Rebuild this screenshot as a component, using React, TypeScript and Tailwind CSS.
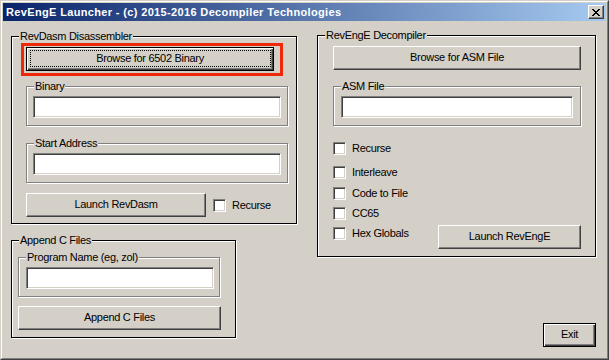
import React from "react";

const FONT = "font-['Liberation_Sans',Arial,sans-serif]";
const raised =
  "bg-[#d4d0c8] border border-t-white border-l-white border-r-[#404040] border-b-[#404040] shadow-[inset_-1px_-1px_0_#808080]";
const defBtn =
  "bg-[#d4d0c8] border border-black shadow-[inset_1px_1px_0_#ffffff,inset_-1px_-1px_0_#404040,inset_-2px_-2px_0_#808080]";
const sunken =
  "bg-white border border-t-[#808080] border-l-[#808080] border-r-white border-b-white shadow-[inset_1px_1px_0_#404040,inset_-1px_-1px_0_#d4d0c8]";
const etched = "border border-[#808080] shadow-[inset_1px_1px_0_#ffffff,1px_1px_0_#ffffff]";
const blackGroup = "border border-black shadow-[inset_1px_1px_0_#ffffff,1px_1px_0_#ffffff]";

function Legend({ children }: { children: React.ReactNode }) {
  return (
    <span className="relative block w-fit -mt-[7px] ml-[7px] px-[1px] bg-[#d4d0c8] leading-[13px] text-black">
      {children}
    </span>
  );
}

function Button({
  className,
  children,
  isDefault,
  focus,
}: {
  className: string;
  children: React.ReactNode;
  isDefault?: boolean;
  focus?: boolean;
}) {
  return (
    <div
      className={`relative flex items-center justify-center h-[24px] pb-[2px] leading-[12px] text-black ${
        isDefault ? defBtn : raised
      } ${className}`}
    >
      {focus && (
        <div className="absolute left-[3px] top-[2px] right-[2px] bottom-[3px] border border-dotted border-black" />
      )}
      <span>{children}</span>
    </div>
  );
}

function TextBox({ className }: { className: string }) {
  return <div className={`h-[22px] ${sunken} ${className}`} />;
}

function Check({ label, className }: { label: string; className?: string }) {
  return (
    <div className={`flex items-start ${className ?? ""}`}>
      <div className={`w-[13px] h-[13px] ${sunken}`} />
      <span className="ml-[6px] leading-[12px] text-black">{label}</span>
    </div>
  );
}

function Etched({
  label,
  className,
  padClass,
}: {
  label: string;
  className: string;
  padClass: string;
}) {
  return (
    <div className={`relative ${etched} ${className}`}>
      <Legend>{label}</Legend>
      <div className={`pt-[3px] pb-[7px] ${padClass}`}>
        <TextBox className="w-full" />
      </div>
    </div>
  );
}

function CloseGlyph() {
  const px: [number, number][] = [];
  const rows = ["XX....XX", ".XX..XX.", "..XXXX..", "...XX...", "..XXXX..", ".XX..XX.", "XX....XX"];
  rows.forEach((r, y) =>
    r.split("").forEach((c, x) => {
      if (c === "X") px.push([x, y]);
    })
  );
  return (
    <svg width="8" height="7" viewBox="0 0 8 7" shapeRendering="crispEdges">
      {px.map(([x, y]) => (
        <rect key={`${x}-${y}`} x={x} y={y} width="1" height="1" fill="#000" />
      ))}
    </svg>
  );
}

export default function App() {
  return (
    <div className={`w-[609px] h-[360px] ${FONT} text-[11px] tracking-[-0.3px] bg-[#d4d0c8]`}>
      <div className="w-full h-full border border-t-[#d4d0c8] border-l-[#d4d0c8] border-r-[#404040] border-b-[#404040]">
        <div className="w-full h-full border border-t-white border-l-white border-r-[#808080] border-b-[#808080] p-[1px] flex flex-col">
          {/* Title bar */}
          <div className="h-[18px] flex items-center justify-between pl-[3px] pr-[2px] bg-[linear-gradient(to_right,#0a246a,#a6caf0)]">
            <span className="text-white font-bold text-[11px] tracking-[0.35px] leading-[18px] whitespace-nowrap">
              RevEngE Launcher - (c) 2015-2016 Decompiler Technologies
            </span>
            <div className={`w-[16px] h-[14px] flex items-center justify-center ${raised}`}>
              <CloseGlyph />
            </div>
          </div>

          {/* Body */}
          <div className="flex-1 flex pl-[8px] gap-[20px]">
            {/* Left column */}
            <div className="w-[286px] pt-[15px] flex flex-col">
              <div className={`relative w-full ${blackGroup}`}>
                <Legend>RevDasm Disassembler</Legend>
                <div className="pl-[14px] pt-[4px] pb-[6px] flex flex-col">
                  <div className="relative w-[248px]">
                    <Button className="w-[248px]" isDefault focus>
                      Browse for 6502 Binary
                    </Button>
                    <div className="absolute -left-[5px] -top-[4px] w-[262px] h-[33px] border-[3px] border-[#f0280a] pointer-events-none" />
                  </div>
                  <Etched label="Binary" className="mt-[15px] w-[262px]" padClass="pl-[6px] pr-[6px]" />
                  <Etched label="Start Address" className="mt-[17px] w-[262px]" padClass="pl-[6px] pr-[6px]" />
                  <div className="mt-[10px] flex items-center">
                    <Button className="w-[180px]">Launch RevDasm</Button>
                    <Check label="Recurse" className="ml-[7px]" />
                  </div>
                </div>
              </div>

              <div className={`relative mt-[16px] w-[225px] ${blackGroup}`}>
                <Legend>Append C Files</Legend>
                <div className="pl-[6px] pb-[7px] flex flex-col">
                  <Etched
                    label="Program Name (eg, zol)"
                    className="mt-[10px] w-[202px]"
                    padClass="pl-[7px] pr-[5px]"
                  />
                  <Button className="mt-[9px] w-[203px]">Append C Files</Button>
                </div>
              </div>
            </div>

            {/* Right column */}
            <div className="w-[279px] pt-[14px] flex flex-col">
              <div className={`relative w-full ${blackGroup}`}>
                <Legend>RevEngE Decompiler</Legend>
                <div className="pl-[15px] pt-[4px] pb-[7px] flex flex-col">
                  <Button className="w-[248px]">Browse for ASM File</Button>
                  <Etched label="ASM File" className="mt-[16px] w-[248px]" padClass="pl-[7px] pr-[7px]" />
                  <Check label="Recurse" className="mt-[16px]" />
                  <Check label="Interleave" className="mt-[11px]" />
                  <Check label="Code to File" className="mt-[8px]" />
                  <Check label="CC65" className="mt-[7px]" />
                  <div className="mt-[5px] w-[248px] flex items-start justify-between">
                    <Check label="Hex Globals" className="mt-[2px]" />
                    <Button className="w-[143px]">Launch RevEngE</Button>
                  </div>
                </div>
              </div>
              <Button className="mt-[66px] w-[53px] self-end" isDefault>
                Exit
              </Button>
            </div>
          </div>
        </div>
      </div>
    </div>
  );
}
